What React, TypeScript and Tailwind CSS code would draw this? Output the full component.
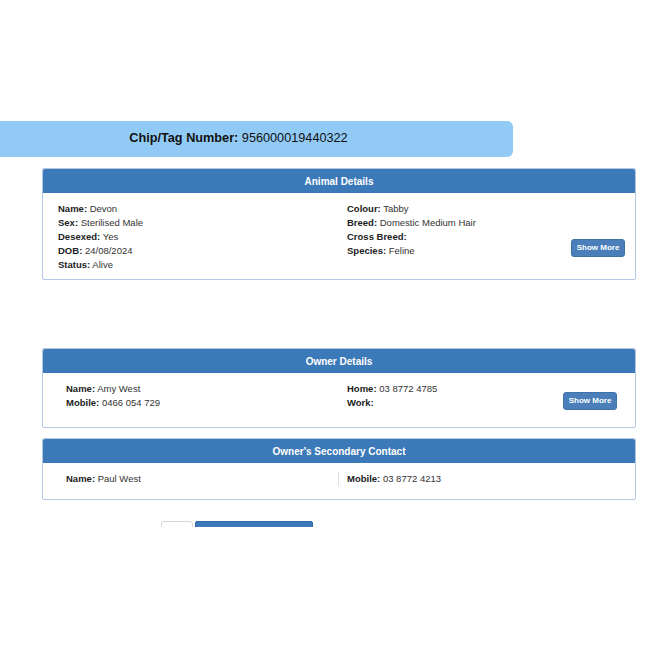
import React from 'react'

type Field = { label: string; value?: string }

function Row({ label, value }: Field) {
    return (
        <div className="h-[14px] leading-[14px] text-[9.5px] text-[#333] whitespace-nowrap">
            <span className="font-bold text-[#222]">{label}:</span>
            {value ? <span> {value}</span> : null}
        </div>
    )
}

function ShowMore({ className }: { className?: string }) {
    return (
        <button className={`w-[54px] h-[18px] shrink-0 rounded-[3px] bg-[#4a7fba] border border-[#3f72ab] text-white text-[8px] font-bold leading-none ${className ?? ''}`}>
            Show More
        </button>
    )
}

function CardHeader({ title }: { title: string }) {
    return (
        <div className="h-[24px] bg-[#3c79b8] flex items-center justify-center text-white text-[10px] font-bold rounded-t-[2px]">
            {title}
        </div>
    )
}

export default function App() {
    const font = { fontFamily: '"Liberation Sans", Arial, sans-serif' }

    return (
        <div className="w-[648px] h-[648px] bg-white overflow-hidden" style={font}>
            <div className="h-[121px]" />

            {/* Chip bar */}
            <div className="w-[513px] h-[36px] bg-[#91cbf5] rounded-r-[6px] flex items-center justify-center text-[12.7px] text-[#111] pr-[36px]">
                <span className="font-bold">Chip/Tag Number:</span>
                <span>&nbsp;956000019440322</span>
            </div>

            <div className="pl-[42px] pr-[12px]">
                {/* Animal Details */}
                <div className="mt-[11px] border border-[#b3c8e2] rounded-[2px]">
                    <CardHeader title="Animal Details" />
                    <div className="grid grid-cols-2 h-[86px]">
                        <div className="pl-[15px] pt-[9px]">
                            <Row label="Name" value="Devon" />
                            <Row label="Sex" value="Sterilised Male" />
                            <Row label="Desexed" value="Yes" />
                            <Row label="DOB" value="24/08/2024" />
                            <Row label="Status" value="Alive" />
                        </div>
                        <div className="pl-[8px] pr-[10px] pt-[9px] flex justify-between">
                            <div>
                                <Row label="Colour" value="Tabby" />
                                <Row label="Breed" value="Domestic Medium Hair" />
                                <Row label="Cross Breed" />
                                <Row label="Species" value="Feline" />
                            </div>
                            <ShowMore className="mt-[37px]" />
                        </div>
                    </div>
                </div>

                {/* Owner Details */}
                <div className="mt-[68px] border border-[#b3c8e2] rounded-[2px]">
                    <CardHeader title="Owner Details" />
                    <div className="grid grid-cols-2 h-[54px]">
                        <div className="pl-[23px] pt-[9px]">
                            <Row label="Name" value="Amy West" />
                            <Row label="Mobile" value="0466 054 729" />
                        </div>
                        <div className="pl-[8px] pr-[18px] pt-[9px] flex justify-between">
                            <div>
                                <Row label="Home" value="03 8772 4785" />
                                <Row label="Work" />
                            </div>
                            <ShowMore className="mt-[10px]" />
                        </div>
                    </div>
                </div>

                {/* Owner's Secondary Contact */}
                <div className="mt-[10px] border border-[#b3c8e2] rounded-[2px]">
                    <CardHeader title="Owner's Secondary Contact" />
                    <div className="grid grid-cols-2 h-[36px]">
                        <div className="pl-[23px] pt-[9px]">
                            <Row label="Name" value="Paul West" />
                        </div>
                        <div className="pt-[9px] flex items-start">
                            <div className="w-px h-[14px] bg-[#e0e0e0] -ml-px mr-[8px]" />
                            <Row label="Mobile" value="03 8772 4213" />
                        </div>
                    </div>
                </div>
            </div>

            {/* Clipped controls at the bottom */}
            <div className="mt-[21px] h-[6px] overflow-hidden flex gap-[2px] pl-[161px]">
                <div className="w-[32px] h-[20px] bg-white border border-[#d6d6d6] rounded-[3px]" />
                <div className="w-[118px] h-[20px] bg-[#3c79b8] border border-[#2f6aa6] rounded-[2px]" />
            </div>
        </div>
    )
}
